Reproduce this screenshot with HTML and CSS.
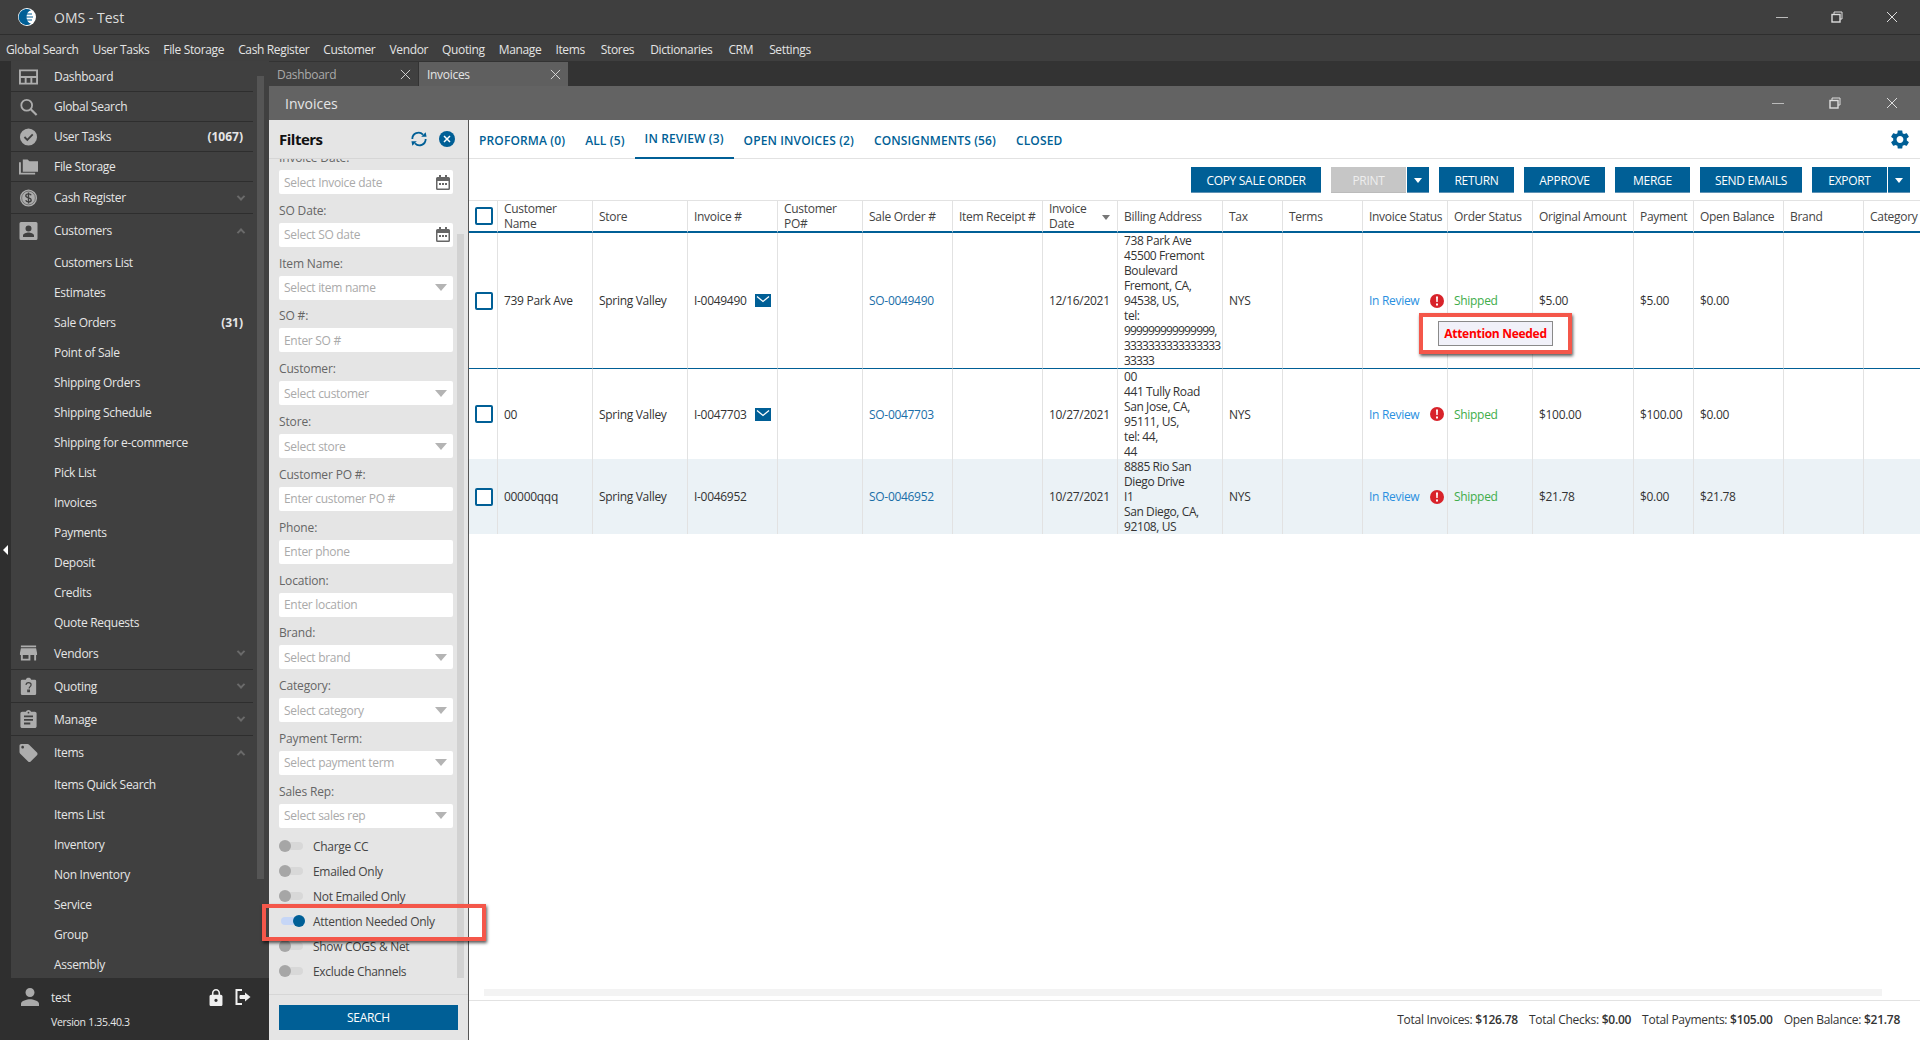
FILE: index.html
```html
<!DOCTYPE html>
<html lang="en">
<head>
<meta charset="utf-8">
<title>OMS - Test</title>
<link rel="stylesheet" href="styles.css">
</head>
<body>
<svg class="defs" width="0" height="0">
  <symbol id="i-x" viewBox="0 0 12 12"><path d="M1 1l10 10M11 1L1 11" fill="none" stroke="currentColor" stroke-width="1"/></symbol>
  <symbol id="i-restore" viewBox="0 0 12 12"><path d="M3 3V1h8v7H9" fill="none" stroke="currentColor"/><rect x="1" y="3.5" width="8" height="7.5" fill="none" stroke="currentColor" stroke-width="1.4"/></symbol>
  <symbol id="i-dash" viewBox="0 0 20 16"><path d="M1 1h18v14H1z M1 8h18 M7 8v7 M13 8v7" fill="none" stroke="currentColor" stroke-width="2"/></symbol>
  <symbol id="i-search" viewBox="0 0 20 20"><circle cx="8" cy="8" r="6" fill="none" stroke="currentColor" stroke-width="2"/><path d="M12.5 12.5L19 19" stroke="currentColor" stroke-width="2.4"/></symbol>
  <symbol id="i-check" viewBox="0 0 20 20"><circle cx="10" cy="10" r="9.5" fill="currentColor"/><path d="M5.5 10l3.2 3.2 6-6" fill="none" stroke="#404040" stroke-width="2"/></symbol>
  <symbol id="i-folder" viewBox="0 0 20 16"><path d="M4 0h5l2 2h9v11H4z" fill="currentColor"/><path d="M1 3v12h16" fill="none" stroke="currentColor" stroke-width="2"/></symbol>
  <symbol id="i-dollar" viewBox="0 0 20 20"><circle cx="10" cy="10" r="9.500" fill="currentColor"/><circle cx="10" cy="10" r="7.600" fill="none" stroke="#404040" stroke-width=".6"/><path d="M13 7c-.5-1.2-1.6-1.6-3-1.6-1.700 0-3 .8-3 2.200 0 3 6 1.600 6 4.500 0 1.400-1.300 2.200-3 2.200-1.500 0-2.600-.6-3.100-1.800M10 3.800v12.400" fill="none" stroke="#404040" stroke-width="1.500"/></symbol>
  <symbol id="i-cust" viewBox="0 0 18 18"><path d="M1.500 0h15A1.500 1.500 0 0 1 18 1.500v15a1.500 1.500 0 0 1-1.500 1.500h-15A1.500 1.500 0 0 1 0 16.500v-15A1.500 1.500 0 0 1 1.500 0zM9 3.500a3 3 0 1 0 0 6 3 3 0 0 0 0-6zM3.500 15h11v-1.500c0-2-3.600-3-5.500-3s-5.500 1-5.500 3z" fill="currentColor" fill-rule="evenodd"/></symbol>
  <symbol id="i-store" viewBox="2 3 20 18"><path d="M20 4H4v2h16V4zm1 10v-2l-1-5H4l-1 5v2h1v6h10v-6h4v6h2v-6h1zm-9 4H6v-4h6v4z" fill="currentColor"/></symbol>
  <symbol id="i-quote" viewBox="0 0 17 20"><path d="M1.500 3H5.500C6 1.500 7 .8 8.500 .8S11 1.500 11.500 3H15.500A1.500 1.500 0 0 1 17 4.500v14a1.500 1.500 0 0 1-1.500 1.500h-14A1.500 1.500 0 0 1 0 18.500v-14A1.500 1.500 0 0 1 1.500 3z" fill="currentColor"/><path d="M5.800 9c0-1.800 1.200-2.800 2.800-2.800s2.800 1 2.800 2.500c0 2-2.200 2.100-2.200 4M7.700 14.500h1.800v1.800H7.700z" fill="none" stroke="#404040" stroke-width="1.300"/></symbol>
  <symbol id="i-manage" viewBox="3 1 18 20"><path d="M19 3h-4.180C14.400 1.840 13.300 1 12 1c-1.300 0-2.400.84-2.820 2H5c-1.100 0-2 .9-2 2v14c0 1.100.9 2 2 2h14c1.100 0 2-.9 2-2V5c0-1.100-.9-2-2-2zm-7 0c.55 0 1 .45 1 1s-.45 1-1 1-1-.45-1-1 .45-1 1-1zm2 14H7v-2h7v2zm3-4H7v-2h10v2zm0-4H7V7h10v2z" fill="currentColor"/></symbol>
  <symbol id="i-tag" viewBox="2 2 20 20"><path d="M21.410 11.580l-9-9C12.050 2.220 11.550 2 11 2H4c-1.100 0-2 .9-2 2v7c0 .55.22 1.050.59 1.420l9 9c.36.36.86.58 1.410.58.55 0 1.050-.22 1.410-.59l7-7c.37-.36.59-.86.59-1.410 0-.55-.23-1.060-.59-1.420zM5.500 7C4.670 7 4 6.330 4 5.500S4.670 4 5.500 4 7 4.670 7 5.500 6.330 7 5.500 7z" fill="currentColor"/></symbol>
  <symbol id="i-person" viewBox="4 4 16 16"><path d="M12 12c2.210 0 4-1.790 4-4s-1.790-4-4-4-4 1.790-4 4 1.790 4 4 4zm0 2c-2.670 0-8 1.340-8 4v2h16v-2c0-2.660-5.330-4-8-4z" fill="currentColor"/></symbol>
  <symbol id="i-lock" viewBox="4 1 16 21"><path d="M18 8h-1V6c0-2.760-2.240-5-5-5S7 3.240 7 6v2H6c-1.100 0-2 .9-2 2v10c0 1.100.9 2 2 2h12c1.100 0 2-.9 2-2V10c0-1.100-.9-2-2-2zm-6 9c-1.100 0-2-.9-2-2s.9-2 2-2 2 .9 2 2-.9 2-2 2zm3.100-9H8.900V6c0-1.710 1.390-3.100 3.100-3.100 1.710 0 3.100 1.390 3.100 3.100v2z" fill="currentColor"/></symbol>
  <symbol id="i-logout" viewBox="0 0 16 16"><path d="M7 1H1.500v14H7" fill="none" stroke="currentColor" stroke-width="2"/><path d="M5 8h6M5 6.500h6v3H5z" stroke="currentColor" fill="currentColor"/><path d="M10 3.500L15.500 8 10 12.500z" fill="currentColor"/></symbol>
  <symbol id="i-cal" viewBox="0 0 14 15"><path d="M1.500 2H3V0h2v2h4V0h2v2h1.500A1.500 1.500 0 0 1 14 3.500v10a1.500 1.500 0 0 1-1.500 1.500h-11A1.500 1.500 0 0 1 0 13.500v-10A1.500 1.500 0 0 1 1.500 2zM1.500 6v7.500h11V6z" fill="currentColor" fill-rule="evenodd"/><path d="M3 8h2v2H3zM6 8h2v2H6zM9 8h2v2H9z" fill="currentColor"/></symbol>
  <symbol id="i-mail" viewBox="0 0 16 13"><rect width="16" height="13" fill="#005f96"/><path d="M2 2.500l6 5 6-5" fill="none" stroke="#fff" stroke-width="1.300"/></symbol>
  <symbol id="i-err" viewBox="0 0 14 14"><circle cx="7" cy="7" r="7" fill="#d8232a"/><path d="M6 2.500h2l-.3 5.500H6.300z M6 9.500h2v2H6z" fill="#fff"/></symbol>
  <symbol id="i-gear" viewBox="2.500 2 19 20"><path d="M19.140 12.940c.04-.3.06-.61.06-.94 0-.32-.02-.64-.07-.94l2.030-1.580c.18-.14.23-.41.12-.61l-1.920-3.320c-.12-.22-.37-.29-.59-.22l-2.390.96c-.5-.38-1.030-.7-1.620-.94l-.36-2.540c-.04-.24-.24-.41-.48-.41h-3.840c-.24 0-.43.17-.47.41l-.36 2.540c-.59.24-1.130.57-1.620.94l-2.390-.96c-.22-.08-.47 0-.59.22L2.740 8.870c-.12.21-.08.47.12.61l2.030 1.580c-.05.3-.09.63-.09.94s.02.64.07.94l-2.030 1.580c-.18.14-.23.41-.12.61l1.920 3.320c.12.22.37.29.59.22l2.390-.96c.5.38 1.030.7 1.620.94l.36 2.540c.05.24.24.41.48.41h3.840c.24 0 .44-.17.47-.41l.36-2.540c.59-.24 1.130-.56 1.620-.94l2.390.96c.22.08.47 0 .59-.22l1.920-3.320c.12-.22.07-.47-.12-.61l-2.010-1.580zM12 15.600c-1.980 0-3.600-1.620-3.600-3.600s1.620-3.600 3.600-3.600 3.600 1.620 3.600 3.600-1.620 3.600-3.600 3.600z" fill="#005f96"/></symbol>
</svg>

<header class="titlebar">
  <svg class="logo" viewBox="0 0 18 18"><circle cx="9" cy="9" r="9" fill="#fff"/><path d="M13 2.300A8 8 0 1 0 13 15.700 C10 15 8.500 12 8.500 9S10 3 13 2.300z" fill="#005f96"/><path d="M5 6h9M4 9h11M5 12h9" stroke="#005f96" stroke-width="1.200"/></svg>
  <span class="app-title">OMS - Test</span>
  <div class="win-ctrls">
    <span class="win-min"></span>
    <svg class="win-ic"><use href="#i-restore"/></svg>
    <svg class="win-ic"><use href="#i-x"/></svg>
  </div>
</header>
<nav class="menubar">
  <span>Global Search</span><span>User Tasks</span><span>File Storage</span><span>Cash Register</span><span>Customer</span><span>Vendor</span><span>Quoting</span><span>Manage</span><span>Items</span><span>Stores</span><span>Dictionaries</span><span>CRM</span><span>Settings</span>
</nav>

<div class="shell">
  <div class="strip"><span class="collapse"></span></div>
  <aside class="sidebar">
    <div class="side-scroll">
      <div class="side-list">
        <div class="row row-line"><svg class="sic"><use href="#i-dash"/></svg><span>Dashboard</span></div>
        <div class="row row-line"><svg class="sic"><use href="#i-search"/></svg><span>Global Search</span></div>
        <div class="row row-line"><svg class="sic"><use href="#i-check"/></svg><span>User Tasks</span><b class="count">(1067)</b></div>
        <div class="row row-line"><svg class="sic"><use href="#i-folder"/></svg><span>File Storage</span></div>
        <div class="row group tight row-line"><svg class="sic"><use href="#i-dollar"/></svg><span>Cash Register</span><i class="chev"></i></div>
        <div class="row group"><svg class="sic"><use href="#i-cust"/></svg><span>Customers</span><i class="chev up"></i></div>
        <div class="row sub"><span>Customers List</span></div>
        <div class="row sub"><span>Estimates</span></div>
        <div class="row sub"><span>Sale Orders</span><b class="count">(31)</b></div>
        <div class="row sub"><span>Point of Sale</span></div>
        <div class="row sub"><span>Shipping Orders</span></div>
        <div class="row sub"><span>Shipping Schedule</span></div>
        <div class="row sub"><span>Shipping for e-commerce</span></div>
        <div class="row sub"><span>Pick List</span></div>
        <div class="row sub"><span>Invoices</span></div>
        <div class="row sub"><span>Payments</span></div>
        <div class="row sub"><span>Deposit</span></div>
        <div class="row sub"><span>Credits</span></div>
        <div class="row sub"><span>Quote Requests</span></div>
        <div class="row group row-line"><svg class="sic"><use href="#i-store"/></svg><span>Vendors</span><i class="chev"></i></div>
        <div class="row group row-line"><svg class="sic"><use href="#i-quote"/></svg><span>Quoting</span><i class="chev"></i></div>
        <div class="row group row-line"><svg class="sic"><use href="#i-manage"/></svg><span>Manage</span><i class="chev"></i></div>
        <div class="row group"><svg class="sic"><use href="#i-tag"/></svg><span>Items</span><i class="chev up"></i></div>
        <div class="row sub"><span>Items Quick Search</span></div>
        <div class="row sub"><span>Items List</span></div>
        <div class="row sub"><span>Inventory</span></div>
        <div class="row sub"><span>Non Inventory</span></div>
        <div class="row sub"><span>Service</span></div>
        <div class="row sub"><span>Group</span></div>
        <div class="row sub"><span>Assembly</span></div>
      </div>
      <div class="side-bar"><span class="side-thumb"></span></div>
    </div>
  </aside>
  <div class="side-foot">
    <div class="user-row">
      <svg class="user-ic"><use href="#i-person"/></svg>
      <span class="user-name">test</span>
      <svg class="lock-ic"><use href="#i-lock"/></svg>
      <svg class="logout-ic"><use href="#i-logout"/></svg>
    </div>
    <div class="version">Version 1.35.40.3</div>
  </div>

  <div class="workspace">
    <div class="tabs">
      <div class="doc-tab"><span>Dashboard</span><svg class="tab-x"><use href="#i-x"/></svg></div>
      <div class="doc-tab active"><span>Invoices</span><svg class="tab-x"><use href="#i-x"/></svg></div>
    </div>
    <div class="winhead">
      <span class="win-title">Invoices</span>
      <div class="win-ctrls inner">
        <span class="win-min"></span>
        <svg class="win-ic"><use href="#i-restore"/></svg>
        <svg class="win-ic"><use href="#i-x"/></svg>
      </div>
    </div>
    <div class="winbody">
      <section class="filters">
        <div class="f-head">
          <span class="f-title">Filters</span>
          <svg class="f-refresh" viewBox="0 0 20 18"><path d="M2.500 9a7 7 0 0 1 12-5M17.500 9a7 7 0 0 1-12 5" fill="none" stroke="#005f96" stroke-width="2"/><path d="M12.500 6.500h6l-1-5z M7.500 11.500h-6l1 5z" fill="#005f96"/></svg>
          <svg class="f-close" viewBox="0 0 16 16"><circle cx="8" cy="8" r="8" fill="#005f96"/><path d="M5 5l6 6M11 5l-6 6" stroke="#fff" stroke-width="1.500"/></svg>
        </div>
        <div class="f-scroll">
          <div class="f-fields">
            <div class="field"><label>Invoice Date:</label><div class="inp"><span>Select Invoice date</span><svg class="cal"><use href="#i-cal"/></svg></div></div>
            <div class="field"><label>SO Date:</label><div class="inp"><span>Select SO date</span><svg class="cal"><use href="#i-cal"/></svg></div></div>
            <div class="field"><label>Item Name:</label><div class="inp sel"><span>Select item name</span></div></div>
            <div class="field"><label>SO #:</label><div class="inp"><span>Enter SO #</span></div></div>
            <div class="field"><label>Customer:</label><div class="inp sel"><span>Select customer</span></div></div>
            <div class="field"><label>Store:</label><div class="inp sel"><span>Select store</span></div></div>
            <div class="field"><label>Customer PO #:</label><div class="inp"><span>Enter customer PO #</span></div></div>
            <div class="field"><label>Phone:</label><div class="inp"><span>Enter phone</span></div></div>
            <div class="field"><label>Location:</label><div class="inp"><span>Enter location</span></div></div>
            <div class="field"><label>Brand:</label><div class="inp sel"><span>Select brand</span></div></div>
            <div class="field"><label>Category:</label><div class="inp sel"><span>Select category</span></div></div>
            <div class="field"><label>Payment Term:</label><div class="inp sel"><span>Select payment term</span></div></div>
            <div class="field"><label>Sales Rep:</label><div class="inp sel"><span>Select sales rep</span></div></div>
            <div class="toggles">
              <div class="tog"><i class="track"></i><span>Charge CC</span></div>
              <div class="tog"><i class="track"></i><span>Emailed Only</span></div>
              <div class="tog"><i class="track"></i><span>Not Emailed Only</span></div>
              <div class="tog on"><i class="track"></i><span>Attention Needed Only</span></div>
              <div class="tog"><i class="track"></i><span>Show COGS &amp; Net</span></div>
              <div class="tog"><i class="track"></i><span>Exclude Channels</span></div>
            </div>
          </div>
          <div class="f-bar"><span class="f-thumb"></span></div>
        </div>
        <div class="f-foot"><button class="search-btn">SEARCH</button></div>
      </section>

      <main class="main">
        <div class="status-tabs">
          <span class="st">PROFORMA (0)</span>
          <span class="st">ALL (5)</span>
          <span class="st active">IN REVIEW (3)</span>
          <span class="st">OPEN INVOICES (2)</span>
          <span class="st">CONSIGNMENTS (56)</span>
          <span class="st">CLOSED</span>
          <svg class="gear"><use href="#i-gear"/></svg>
        </div>
        <div class="toolbar">
          <button class="btn w130">COPY SALE ORDER</button>
          <div class="split"><button class="btn off w75">PRINT</button><button class="btn caret"></button></div>
          <button class="btn w75">RETURN</button>
          <button class="btn w81">APPROVE</button>
          <button class="btn w75">MERGE</button>
          <button class="btn w102">SEND EMAILS</button>
          <div class="split"><button class="btn w75">EXPORT</button><button class="btn caret"></button></div>
        </div>
        <div class="grid-wrap">
          <table class="grid">
            <colgroup>
              <col class="c29"><col class="c95"><col class="c95"><col class="c90"><col class="c85"><col class="c90"><col class="c90"><col class="c75"><col class="c105"><col class="c60"><col class="c80"><col class="c85"><col class="c85"><col class="c101"><col class="c60"><col class="c90"><col class="c80"><col class="c56">
            </colgroup>
            <thead>
              <tr>
                <th class="chk"><i class="box"></i></th>
                <th>Customer<br>Name</th><th>Store</th><th>Invoice #</th><th>Customer<br>PO#</th><th>Sale Order #</th><th>Item Receipt #</th>
                <th class="sorted">Invoice<br>Date<i class="sort"></i></th>
                <th>Billing Address</th><th>Tax</th><th>Terms</th><th>Invoice Status</th><th>Order Status</th><th>Original Amount</th><th>Payment</th><th>Open Balance</th><th>Brand</th><th>Category</th>
              </tr>
            </thead>
            <tbody>
              <tr class="r1">
                <td class="chk"><i class="box"></i></td>
                <td>739 Park Ave</td><td>Spring Valley</td>
                <td><div class="inv">I-0049490<svg class="mail"><use href="#i-mail"/></svg></div></td>
                <td></td><td class="link">SO-0049490</td><td></td><td>12/16/2021</td>
                <td class="addr">738 Park Ave<br>45500 Fremont<br>Boulevard<br>Fremont, CA,<br>94538, US,<br>tel:<br><span class="digits">999999999999999,<br>3333333333333333<br>33333</span></td>
                <td>NYS</td><td></td>
                <td><div class="stat"><span class="review">In Review</span><svg class="err"><use href="#i-err"/></svg></div></td>
                <td class="ship">Shipped</td><td>$5.00</td><td>$5.00</td><td>$0.00</td><td></td><td></td>
              </tr>
              <tr class="r2">
                <td class="chk"><i class="box"></i></td>
                <td>00</td><td>Spring Valley</td>
                <td><div class="inv">I-0047703<svg class="mail"><use href="#i-mail"/></svg></div></td>
                <td></td><td class="link">SO-0047703</td><td></td><td>10/27/2021</td>
                <td class="addr">00<br>441 Tully Road<br>San Jose, CA,<br>95111, US,<br>tel: 44,<br>44</td>
                <td>NYS</td><td></td>
                <td><div class="stat"><span class="review">In Review</span><svg class="err"><use href="#i-err"/></svg></div></td>
                <td class="ship">Shipped</td><td>$100.00</td><td>$100.00</td><td>$0.00</td><td></td><td></td>
              </tr>
              <tr class="r3">
                <td class="chk"><i class="box"></i></td>
                <td>00000qqq</td><td>Spring Valley</td>
                <td>I-0046952</td>
                <td></td><td class="link">SO-0046952</td><td></td><td>10/27/2021</td>
                <td class="addr">8885 Rio San<br>Diego Drive<br>I1<br>San Diego, CA,<br>92108, US</td>
                <td>NYS</td><td></td>
                <td><div class="stat"><span class="review">In Review</span><svg class="err"><use href="#i-err"/></svg></div></td>
                <td class="ship">Shipped</td><td>$21.78</td><td>$0.00</td><td>$21.78</td><td></td><td></td>
              </tr>
            </tbody>
          </table>
        </div>
        <div class="hscroll"><span></span></div>
        <footer class="totals">
          <span>Total Invoices: <b>$126.78</b></span>
          <span>Total Checks: <b>$0.00</b></span>
          <span>Total Payments: <b>$105.00</b></span>
          <span>Open Balance: <b>$21.78</b></span>
        </footer>
      </main>
    </div>
  </div>
</div>

<div class="callout call-toggle"></div>
<div class="callout call-tip"><span class="tip">Attention Needed</span></div>
</body>
</html>
```

FILE: styles.css
```css
* { box-sizing: border-box; }
html, body { margin: 0; padding: 0; height: 100%; }
body {
  width: 1920px; height: 1040px; overflow: hidden; position: relative;
  background: #3f3f3f; color: #222;
  font-family: "Open Sans", "Noto Sans", "Liberation Sans", sans-serif;
  font-size: 12px; letter-spacing: -0.3px; line-height: 15px;
}
.defs { position: absolute; }
button { font: inherit; letter-spacing: inherit; border: 0; cursor: pointer; }

.titlebar { height: 35px; display: flex; align-items: center; padding-left: 18px; background: #3f3f3f; border-bottom: 1px solid #2e2e2e; color: #ddd; }
.logo { width: 18px; height: 18px; margin-right: 18px; }
.app-title { font-size: 14px; letter-spacing: 0; }
.win-ctrls { margin-left: auto; display: flex; align-items: center; gap: 43px; padding-right: 22px; color: #ddd; }
.win-min { width: 12px; height: 1px; background: #bbb; }
.win-ic { width: 12px; height: 12px; }
.menubar { height: 26px; display: flex; align-items: center; gap: 14px; padding: 3px 0 0 6px; background: #3f3f3f; color: #e4e4e4; letter-spacing: -0.35px; }
.menubar span:nth-child(n+10) { margin-left: 2px; }

.shell { height: 979px; display: grid; grid-template-columns: 11px 258px 1fr; grid-template-rows: 917px 62px; }
.strip { grid-column: 1; grid-row: 1 / 3; background: #2f2f2f; position: relative; display: flex; align-items: center; }
.collapse { width: 0; height: 0; margin-left: 3px; margin-top: -2px; border: 5px solid transparent; border-right: 5px solid #fff; border-left: 0; }
.sidebar { grid-column: 2; grid-row: 1; background: #404040; overflow: hidden; min-height: 0; }
.side-scroll { display: flex; height: 100%; }
.side-list { width: 242px; color: #e6e6e6; flex: none; padding-top: 1px; }
.row { height: 30px; display: flex; align-items: center; padding-right: 10px; }
.row-line { border-bottom: 1px solid #2e2e2e; }
.group { height: 33px; }
.group.tight { height: 32px; }
.sub { padding-left: 43px; }
.sic { width: 19px; height: 18px; margin: 0 16px 0 8px; color: #adadad; flex: none; }
.count { margin-left: auto; font-weight: 700; letter-spacing: 0; }
.chev { margin-left: auto; margin-right: -1px; width: 6px; height: 6px; border-right: 2px solid #6a6a6a; border-bottom: 2px solid #6a6a6a; transform: rotate(45deg) translate(-1px,-1px); }
.chev.up { transform: rotate(225deg) translate(-1px,-1px); }
.side-bar { margin-left: 4px; width: 7px; padding-top: 15px; }
.side-thumb { display: block; height: 803px; background: #555; }

.side-foot { grid-column: 2; grid-row: 2; background: #2f2f2f; color: #e8e8e8; padding: 7px 0 0 10px; margin-bottom: -1px; }
.user-row { display: flex; align-items: center; height: 24px; }
.user-ic { width: 18px; height: 18px; color: #aaa; margin-right: 12px; margin-left: 0; }
.user-name { font-size: 12px; }
.lock-ic { width: 14px; height: 17px; margin-left: auto; color: #f0f0f0; }
.logout-ic { width: 16px; height: 16px; margin: 0 18px 0 12px; color: #f0f0f0; }
.version { margin: 6px 0 0 30px; font-size: 10.500px; }

.workspace { grid-column: 3; grid-row: 1 / 3; display: flex; flex-direction: column; background: #333; min-width: 0; }
.tabs { height: 25px; display: flex; padding-top: 1px; background: #333; gap: 1px; }
.doc-tab { width: 149px; display: flex; align-items: center; justify-content: space-between; padding: 0 7px 0 8px; background: #404040; color: #aaa; }
.doc-tab.active { background: #5f5f5f; color: #e4e4e4; }
.tab-x { width: 11px; height: 11px; color: #ddd; }
.winhead { height: 34px; display: flex; align-items: center; padding-left: 16px; background: #636363; color: #e6e6e6; }
.win-title { font-size: 14px; letter-spacing: 0; }
.win-ctrls.inner { gap: 45px; }
.winbody { flex: 1; display: flex; min-height: 0; background: #fff; }

.filters { width: 200px; display: flex; flex-direction: column; background: #e5e5e5; border-right: 1px solid #555; flex: none; }
.f-head { height: 39px; flex: none; display: flex; align-items: center; padding: 0 13px 0 10px; border-bottom: 1px solid #d6d6d6; }
.f-title { font-size: 15px; font-weight: 700; color: #111; margin-right: auto; letter-spacing: -0.5px; }
.f-refresh { width: 18px; height: 16px; margin-right: 11px; }
.f-close { width: 16px; height: 16px; }
.f-scroll { flex: 1; display: flex; overflow: hidden; position: relative; }
.f-fields { width: 188px; padding-left: 10px; flex: none; margin-top: -12px; }
.field { height: 52.820px; display: flex; flex-direction: column; color: #666; }
.field label { height: 23px; line-height: 18px; letter-spacing: -0.150px; padding-top: 2px; }
.inp { width: 174px; height: 24px; display: flex; align-items: center; justify-content: space-between; padding: 0 3px 0 5px; background: #fff; color: #aaa; border-radius: 2px; }
.cal { width: 14px; height: 15px; color: #666; }
.sel::after { content: ""; border: 6px solid transparent; border-top: 7px solid #b4b4b4; border-bottom: 0; margin-right: 3px; }
.toggles { margin-top: 0; }
.tog { height: 25px; display: flex; align-items: center; gap: 10px; color: #444; }
.track { width: 24px; height: 8px; border-radius: 4px; background: #d8d8d8; position: relative; flex: none; }
.track::after { content: ""; position: absolute; left: 0; top: -2px; width: 12px; height: 12px; border-radius: 50%; background: #a6a6a6; }
.tog.on .track { background: #c6d6f6; margin-left: 2px; margin-right: -2px; }
.tog.on .track::after { left: 12px; background: #005f96; }
.f-bar { width: 7px; margin-left: 0; padding-top: 75px; }
.f-thumb { display: block; height: 744px; background: #d2d2d2; }
.f-foot { height: 46px; flex: none; border-top: 1px solid #d6d6d6; padding: 10px 0 0 10px; }
.search-btn { width: 179px; height: 25px; background: #005f96; color: #fff; font-size: 12px; }

.main { flex: 1; min-width: 0; display: flex; flex-direction: column; position: relative; }
.status-tabs { height: 39px; flex: none; display: flex; align-items: stretch; padding-left: 0; border-bottom: 1px solid #e2e2e2; }
.st { padding: 2px 10px 0; display: flex; align-items: center; color: #005f96; font-weight: 600; letter-spacing: 0.13px; }
.st.active { border-bottom: 2px solid #005f96; margin-bottom: -1px; padding-top: 0; padding-bottom: 0; }
.gear { width: 18px; height: 19px; margin: 10px 11px 0 auto; }
.toolbar { height: 41px; flex: none; display: flex; justify-content: flex-end; align-items: flex-start; gap: 10px; padding: 8px 10px 0 0; }
.btn { height: 26px; background: #005f96; color: #fff; border-bottom: 1px solid #5e92b5; padding: 1px 0 0; }
.w130 { width: 130px; } .w75 { width: 75px; } .w81 { width: 81px; } .w102 { width: 102px; }
.off { background: #c6c6c6; color: #eee; border-bottom-color: #bbb; }
.split { display: flex; gap: 1px; }
.caret { width: 22px; display: flex; align-items: center; justify-content: center; }
.caret::after { content: ""; border: 4px solid transparent; border-top: 5px solid #fff; border-bottom: 0; }

.grid-wrap { flex: 1; min-height: 0; overflow: hidden; }
.grid { width: 1451px; table-layout: fixed; border-collapse: separate; border-spacing: 0; }
.c29 { width: 29px; } .c95 { width: 95px; } .c90 { width: 90px; } .c85 { width: 85px; } .c75 { width: 75px; } .c105 { width: 105px; } .c60 { width: 60px; } .c80 { width: 80px; } .c101 { width: 101px; } .c56 { width: 56px; }
th, td { padding: 0 0 0 6px; border-right: 1px solid #e2e2e2; vertical-align: middle; text-align: left; font-weight: 400; white-space: nowrap; overflow: hidden; color: #333; }
th { height: 32px; border-top: 1px solid #e2e2e2; border-bottom: 2px solid #005f96; color: #444; position: relative; }
th:last-child, td:last-child { border-right: 0; }
.r1 td { height: 136px; border-bottom: 1px solid #005f96; }
.r2 td { height: 90px; }
.r3 td { height: 75px; background: #ebf2f6; }
th.chk, td.chk { padding-left: 6px; }
.box { display: block; width: 18px; height: 18px; border: 2px solid #005f96; border-radius: 2px; background: #fff; }
.sort { position: absolute; right: 7px; top: 14px; border: 4px solid transparent; border-top: 5px solid #777; border-bottom: 0; }
.inv { display: flex; align-items: center; gap: 8px; }
.mail { width: 16px; height: 13px; }
.link { color: #1a6ea8; }
.addr { letter-spacing: -0.4px; }
.digits { letter-spacing: -0.85px; }
.stat { display: flex; align-items: center; justify-content: space-between; padding-right: 3px; }
.review { color: #2a90e0; }
.err { width: 14px; height: 14px; }
.ship { color: #40ad4a; }

.hscroll { height: 11px; flex: none; padding: 0 38px 0 15px; }
.hscroll span { display: block; height: 7px; background: #f3f3f3; }
.totals { height: 40px; flex: none; border-top: 1px solid #e2e2e2; display: flex; justify-content: flex-end; align-items: center; gap: 11px; padding: 0 20px 2px 0; color: #333; letter-spacing: -0.27px; }
.totals b { font-weight: 600; }

.callout { position: absolute; border: 4px solid #f4574a; box-shadow: 1px 2px 3px rgba(0,0,0,.65); }
.call-toggle { left: 262px; top: 904px; width: 224px; height: 37px; }
.call-tip { left: 1419px; top: 313px; width: 153px; height: 41px; background: #fff; display: flex; align-items: center; justify-content: center; }
.tip { display: block; width: 115px; height: 25px; line-height: 23px; text-align: center; margin-left: 0; border: 1px solid #8a8a8a; background: #f1f1f9; color: #f00; font-weight: 700; }
```
